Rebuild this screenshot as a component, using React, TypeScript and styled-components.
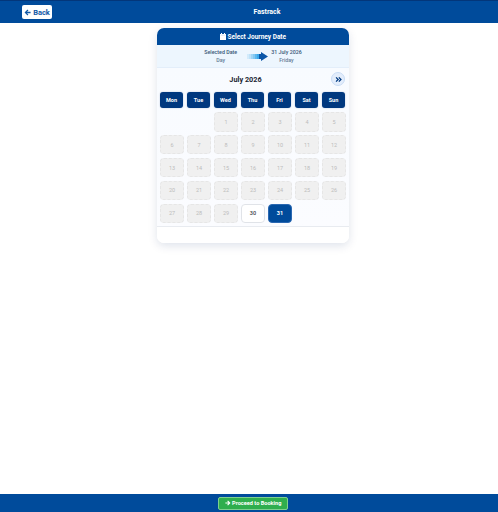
import React from "react";
import styled, { createGlobalStyle } from "styled-components";

const Global = createGlobalStyle`
  html, body { margin: 0; padding: 0; background: #fff; }
  body { font-family: Roboto, "Liberation Sans", sans-serif; }
  * { box-sizing: border-box; }
`;

const Page = styled.div`
  height: 512px;
  display: flex;
  flex-direction: column;
  overflow: hidden;
`;

const TopBar = styled.header`
  height: 23px;
  flex: none;
  background: #004b9b;
  border-top: 1px solid #03367a;
  display: flex;
  align-items: center;
  padding: 0 16px 0 22px;
`;

const BackButton = styled.button`
  flex: none;
  width: 30px;
  height: 14px;
  border: 0;
  padding: 0;
  border-radius: 2px;
  background: #fff;
  color: #1259a6;
  font: 700 7.5px Roboto, sans-serif;
  display: flex;
  align-items: center;
  justify-content: center;
  gap: 2px;
`;

const PageTitle = styled.div`
  flex: 1;
  text-align: center;
  color: #fff;
  font-weight: 700;
  font-size: 7px;
`;

const Main = styled.main`
  flex: 1;
  display: flex;
  justify-content: center;
  align-items: flex-start;
  padding: 5px 0 0 8px;
`;

const Card = styled.section`
  width: 192px;
  height: 215px;
  border-radius: 7px;
  background: #fff;
  box-shadow: 0 3px 10px rgba(0, 40, 100, 0.13);
  overflow: hidden;
  display: flex;
  flex-direction: column;
`;

const CardHeader = styled.div`
  height: 17px;
  flex: none;
  background: #004b9b;
  color: #fff;
  font-weight: 700;
  font-size: 6.5px;
  display: flex;
  align-items: center;
  justify-content: center;
  gap: 1.5px;
`;

const Strip = styled.div`
  height: 23px;
  flex: none;
  background: #edf6fe;
  border-bottom: 1px solid #e3eefa;
  display: flex;
  justify-content: center;
  align-items: center;
`;

const StripColumn = styled.div`
  display: flex;
  flex-direction: column;
  align-items: center;
  gap: 2.5px;
  font-size: 5.3px;
  line-height: 6px;
  font-weight: 500;
`;

const StripMain = styled.span`
  color: #3a5678;
`;

const StripSub = styled.span`
  color: #667d98;
`;

const ArrowSlot = styled.div`
  display: flex;
  margin: 0 3px 0 10px;
`;

const Body = styled.div`
  flex: 1;
  background: linear-gradient(#f8fbff, #fbfcff);
  padding: 4px 3px 0;
`;

const MonthRow = styled.div`
  height: 14px;
  display: flex;
  align-items: center;
  padding-right: 1px;
  margin-bottom: 6px;
`;

const MonthTitle = styled.div`
  flex: 1;
  text-align: center;
  font-size: 7.3px;
  font-weight: 700;
  color: #222633;
`;

const NextButton = styled.button`
  width: 14px;
  height: 14px;
  border-radius: 50%;
  border: 1px solid #c9dcf5;
  background: #e3edfb;
  color: #003a80;
  padding: 0;
  display: flex;
  align-items: center;
  justify-content: center;
`;

const Grid = styled.div`
  display: grid;
  grid-template-columns: repeat(7, 24px);
  column-gap: 3px;
  justify-content: center;
`;

const WeekDay = styled.div`
  height: 16px;
  margin-bottom: 4px;
  width: 23px;
  border-radius: 3px;
  background: #00387f;
  box-shadow: 0 0 1.5px rgba(0, 56, 127, 0.35);
  color: #fff;
  font-size: 5.5px;
  font-weight: 700;
  display: flex;
  align-items: center;
  justify-content: center;
`;

const Day = styled.div<{ $kind: "off" | "open" | "selected" | "blank" }>`
  height: 19.5px;
  margin-bottom: 3.4px;
  border-radius: 4px;
  font-size: 5.5px;
  font-weight: 400;
  display: flex;
  align-items: center;
  justify-content: center;
  ${({ $kind }) =>
    $kind === "off"
      ? "background:#f0f0f0;border:1px dashed #e6e6e6;color:#bcbcbc;"
      : $kind === "open"
      ? "background:#fff;border:1px solid #e0e3e8;color:#3a3f48;font-weight:500;"
      : $kind === "selected"
      ? "background:#004b9b;border:1px solid #2a68b2;color:#fff;font-weight:700;"
      : ""}
`;

const CardFoot = styled.div`
  height: 17px;
  flex: none;
  background: #fff;
  border-top: 1px solid #e8ebf0;
`;

const BottomBar = styled.footer`
  height: 18px;
  flex: none;
  background: #004b9b;
  display: flex;
  align-items: center;
  justify-content: center;
  padding-left: 8px;
`;

const ProceedButton = styled.button`
  width: 70px;
  height: 13px;
  padding: 0;
  border-radius: 2px;
  border: 1px solid #7fd08f;
  background: #2fae4e;
  color: #fff;
  font: 700 5.6px Roboto, sans-serif;
  display: flex;
  align-items: center;
  justify-content: center;
  gap: 1.5px;
`;

const ArrowLeft = () => (
  <svg width="7" height="7" viewBox="0 0 10 10" fill="currentColor" aria-hidden>
    <path d="M5 .8 .8 5 5 9.2 6.3 8 4.2 6H9.4V4H4.2L6.3 2Z" />
  </svg>
);

const ArrowRight = () => (
  <svg width="6" height="6" viewBox="0 0 10 10" fill="currentColor" aria-hidden>
    <path d="M5 .8 9.2 5 5 9.2 3.7 8 5.8 6H.6V4H5.8L3.7 2Z" />
  </svg>
);

const Calendar = () => (
  <svg width="6" height="7" viewBox="0 0 6 7" fill="#fff" aria-hidden>
    <path d="M0 1h6v6H0zM1 0h1v1H1zM4 0h1v1H4z" />
    <path d="M.6 2.2h4.8" stroke="#9fbde0" strokeWidth=".4" />
  </svg>
);

const TAIL = [
  { x: 0, o: 0.12 },
  { x: 2, o: 0.22 },
  { x: 4, o: 0.36 },
  { x: 6, o: 0.5 },
  { x: 8, o: 0.68 },
  { x: 10, o: 0.85 },
];

const FlowArrow = () => (
  <svg width="21" height="9" viewBox="0 0 21 9" aria-hidden>
    {TAIL.map((t) => (
      <rect key={t.x} x={t.x} y="2" width="2" height="5" fill="#1c9be6" opacity={t.o} />
    ))}
    <path d="M12 2H14V0L21 4.5 14 9V7H12Z" fill="#0a56a8" />
  </svg>
);

const Chevrons = () => (
  <svg width="7" height="7" viewBox="0 0 10 10" fill="none" stroke="currentColor" strokeWidth="1.8" aria-hidden>
    <path d="M1.5 2 4.5 5 1.5 8M5.5 2 8.5 5 5.5 8" />
  </svg>
);

const WEEK = ["Mon", "Tue", "Wed", "Thu", "Fri", "Sat", "Sun"];
const kindOf = (d: number) => (d === 31 ? "selected" : d === 30 ? "open" : "off");

export default function App() {
  return (
    <Page>
      <Global />
      <TopBar>
        <BackButton>
          <ArrowLeft />
          Back
        </BackButton>
        <PageTitle>Fastrack</PageTitle>
      </TopBar>
      <Main>
        <Card>
          <CardHeader>
            <Calendar />
            Select Journey Date
          </CardHeader>
          <Strip>
            <StripColumn>
              <StripMain>Selected Date</StripMain>
              <StripSub>Day</StripSub>
            </StripColumn>
            <ArrowSlot>
              <FlowArrow />
            </ArrowSlot>
            <StripColumn>
              <StripMain>31 July 2026</StripMain>
              <StripSub>Friday</StripSub>
            </StripColumn>
          </Strip>
          <Body>
            <MonthRow>
              <MonthTitle>July 2026</MonthTitle>
              <NextButton>
                <Chevrons />
              </NextButton>
            </MonthRow>
            <Grid>
              {WEEK.map((w) => (
                <WeekDay key={w}>{w}</WeekDay>
              ))}
              <Day $kind="blank" />
              <Day $kind="blank" />
              {Array.from({ length: 31 }, (_, i) => (
                <Day key={i} $kind={kindOf(i + 1)}>
                  {i + 1}
                </Day>
              ))}
            </Grid>
          </Body>
          <CardFoot />
        </Card>
      </Main>
      <BottomBar>
        <ProceedButton>
          <ArrowRight />
          Proceed to Booking
        </ProceedButton>
      </BottomBar>
    </Page>
  );
}
